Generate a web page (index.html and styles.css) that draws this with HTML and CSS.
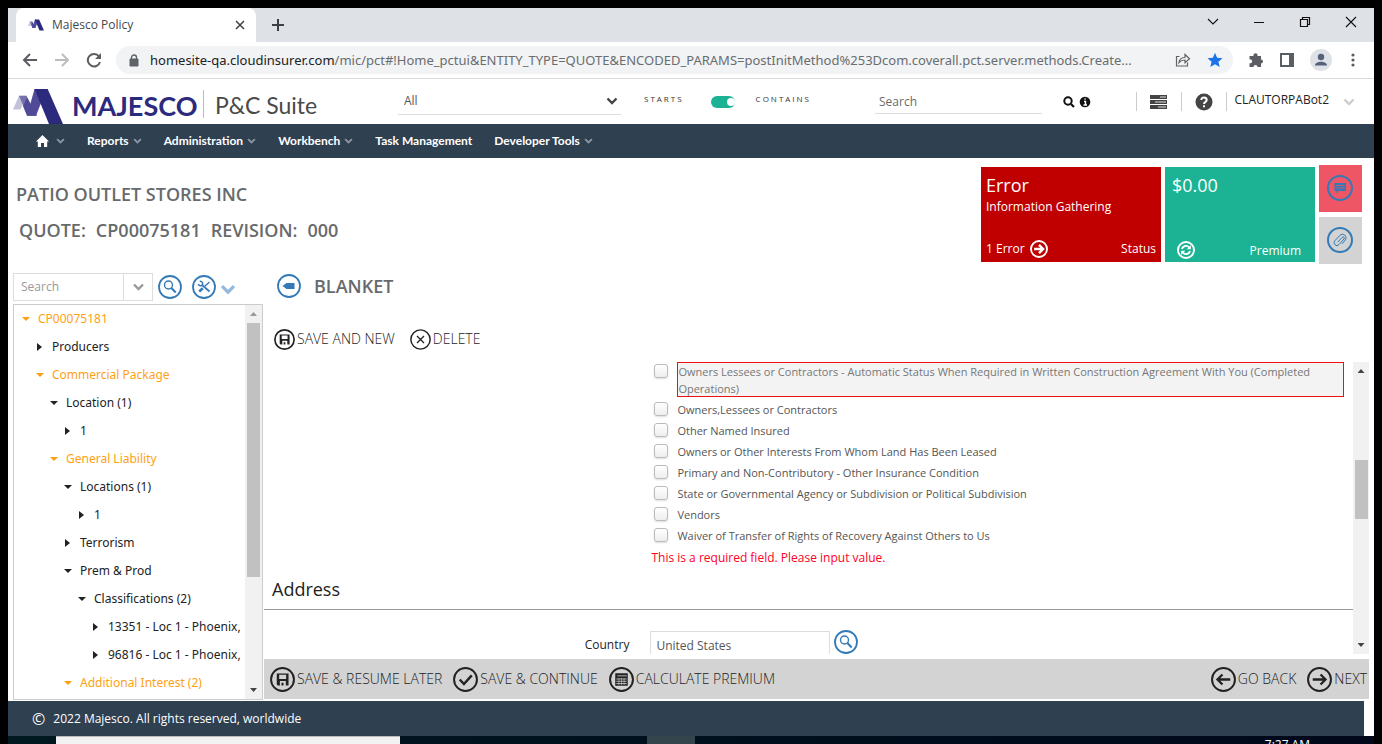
FILE: index.html
```html
<!DOCTYPE html>
<html lang="en">
<head>
<meta charset="utf-8">
<title>Majesco Policy</title>
<link rel="stylesheet" href="styles.css">
</head>
<body>
<svg class="defs" aria-hidden="true">
  <symbol id="logo" viewBox="0 0 50 35">
    <path fill="#c3c1dc" d="M0 20.5 6 6.700h7.500L7.500 20.500z"/>
    <path fill="#7671ad" d="M6 6.700h7.500l6 12-5 8z"/>
    <path fill="#504a98" d="M14 8.500 24 26.700H14L10 17z"/>
    <path fill="#504a98" d="M14 26.700 21.500 0h4L28 14l-5 12.700z"/>
    <path fill="#2c2a7d" d="M21.500 0h13.200L50 35H36z"/>
  </symbol>
  <symbol id="chev" viewBox="0 0 12 8"><path d="M1.500 1.500 6 6l4.500-4.500" fill="none" stroke="currentColor" stroke-width="2.400"/></symbol>
  <symbol id="search" viewBox="0 0 24 24"><circle cx="12" cy="12" r="11" fill="none" stroke="currentColor" stroke-width="1.800"/><circle cx="10.500" cy="10" r="4" fill="none" stroke="currentColor" stroke-width="1.400"/><path d="m13.400 13 4.300 4.500" stroke="currentColor" stroke-width="2"/></symbol>
  <symbol id="tools" viewBox="0 0 24 24"><circle cx="12" cy="12" r="11" fill="none" stroke="currentColor" stroke-width="1.800"/><path d="m10 10 7.500 6.500" stroke="currentColor" stroke-width="1.700"/><path d="m17.500 7-4.800 4.300" stroke="currentColor" stroke-width="1.300"/><path d="m10.800 13.200-3.600 3.300" stroke="currentColor" stroke-width="2.600"/><path d="M7.700 6.500A2.200 2.200 0 1 1 6.300 9" fill="none" stroke="currentColor" stroke-width="1.500"/></symbol>
  <symbol id="save" viewBox="0 0 24 24"><circle cx="12" cy="12" r="11" fill="none" stroke="currentColor" stroke-width="1.900"/><path fill="currentColor" fill-rule="evenodd" d="M6.500 6.300h11.300v11.400H7.500l-1-1zM8.800 7.500v4h6.700v-4zM9.500 13.500v4.200h1.500v-2.700h2v2.700h2.200v-4.200z"/></symbol>
  <symbol id="x" viewBox="0 0 24 24"><circle cx="12" cy="12" r="11" fill="none" stroke="currentColor" stroke-width="1.700"/><path d="m8 8 8 8M16 8l-8 8" stroke="currentColor" stroke-width="1.500"/></symbol>
  <symbol id="check" viewBox="0 0 24 24"><circle cx="12" cy="12" r="11" fill="none" stroke="currentColor" stroke-width="1.900"/><path d="m6.500 12 4 4.300L18 8" fill="none" stroke="currentColor" stroke-width="2.400"/></symbol>
  <symbol id="calc" viewBox="0 0 24 24"><circle cx="12" cy="12" r="11" fill="none" stroke="currentColor" stroke-width="1.900"/><path fill="currentColor" d="M6 6h12v12H6z"/><path d="M8 8.500h9M7 11.500h10M7 13.700h10M7 15.900h10" stroke="#d3d3d3" stroke-width=".8"/><path d="M9.500 10.500v7M12 10.500v7M14.500 10.500v7" stroke="#d3d3d3" stroke-width=".5"/></symbol>
  <symbol id="right" viewBox="0 0 24 24"><circle cx="12" cy="12" r="11" fill="none" stroke="currentColor" stroke-width="1.900"/><path d="M5.500 12h12M13 7.200l4.800 4.800-4.800 4.800" fill="none" stroke="currentColor" stroke-width="2.200"/></symbol>
  <symbol id="right-bold" viewBox="0 0 24 24"><circle cx="12" cy="12" r="10.700" fill="none" stroke="currentColor" stroke-width="2.500"/><path d="M5.500 12h11M12 6.500l5.500 5.500-5.500 5.500" fill="none" stroke="currentColor" stroke-width="3.200"/></symbol>
  <symbol id="left" viewBox="0 0 24 24"><circle cx="12" cy="12" r="11" fill="none" stroke="currentColor" stroke-width="1.900"/><path d="M18.500 12h-12M11 7.200 6.200 12l4.800 4.800" fill="none" stroke="currentColor" stroke-width="2.200"/></symbol>
  <symbol id="tag" viewBox="0 0 24 24"><circle cx="12" cy="12" r="11" fill="none" stroke="currentColor" stroke-width="1.800"/><path d="m5.500 12 4-3h8v6h-8z" fill="currentColor"/></symbol>
  <symbol id="sync" viewBox="0 0 24 24"><circle cx="12" cy="12" r="10.700" fill="none" stroke="currentColor" stroke-width="2.500"/><path d="M6.500 10.500a5.800 5.800 0 0 1 9.800-2M17.500 13.500a5.800 5.800 0 0 1-9.800 2" fill="none" stroke="currentColor" stroke-width="2.500"/><path d="M18.500 5.500v5.500H13zM5.500 18.500V13H11z" fill="currentColor"/></symbol>
  <symbol id="note" viewBox="0 0 26 26"><circle cx="13" cy="13" r="12" fill="none" stroke="currentColor" stroke-width="2"/><path fill="currentColor" d="M7.500 8h11.500v8h-7.500L9.500 18.500V16h-2z"/><path d="M9 10.500h8.500M9 13h8.500" stroke="#ee5565" stroke-width=".8"/></symbol>
  <symbol id="clip" viewBox="0 0 26 26"><circle cx="13" cy="13" r="12" fill="none" stroke="currentColor" stroke-width="2"/><path d="m10.800 15.200 4.400-4.900a1.200 1.200 0 0 1 1.800 1.700L12 17.600a2.800 2.800 0 0 1-4.200-3.800l5.200-5.600a3.600 3.600 0 0 1 5.400 4.700l-3.200 3.900" fill="none" stroke="currentColor"/></symbol>
</svg>

<div class="window">
  <div class="tabs">
    <div class="tab"><svg class="fav"><use href="#logo"/></svg><span class="tab-title">Majesco Policy</span>
      <button class="plain" aria-label="Close tab"><svg width="10" height="10"><path d="m1 1 8 8M9 1 1 9" stroke="#3c4043" stroke-width="1.500"/></svg></button></div>
    <button class="plain" aria-label="New tab"><svg width="14" height="14"><path d="M7 1v12M1 7h12" stroke="#3c4043" stroke-width="2"/></svg></button>
    <div class="controls">
      <button class="plain" aria-label="Search tabs"><svg width="12" height="12"><path d="m1 3 5 5 5-5" fill="none" stroke="#111" stroke-width="1.100"/></svg></button>
      <button class="plain" aria-label="Minimize"><svg width="12" height="12"><path d="M1 6.500h10" stroke="#111"/></svg></button>
      <button class="plain" aria-label="Restore"><svg width="12" height="12"><path d="M1.500 3.500h7v7h-7zM3.500 3.500v-2h7v7h-2" fill="none" stroke="#111" stroke-width="1.200"/></svg></button>
      <button class="plain" aria-label="Close"><svg width="12" height="12"><path d="m1 1 10 10M11 1 1 11" stroke="#111" stroke-width="1.100"/></svg></button>
    </div>
  </div>

  <div class="toolbar">
    <button class="plain" aria-label="Back"><svg width="16" height="16"><path d="M15 8H2M8 2 2 8l6 6" fill="none" stroke="#5a5d61" stroke-width="2"/></svg></button>
    <button class="plain" aria-label="Forward"><svg width="16" height="16"><path d="M1 8h13M8 2l6 6-6 6" fill="none" stroke="#bbbdc0" stroke-width="2"/></svg></button>
    <button class="plain" aria-label="Reload"><svg width="16" height="16"><path d="M13 4.500A6.200 6.200 0 1 0 14 10" fill="none" stroke="#5a5d61" stroke-width="2"/><path d="M15 1v6H9z" fill="#5a5d61"/></svg></button>
    <div class="omnibox">
      <svg width="10" height="13"><path d="M1 5h8v7H1z" fill="#5f6368" stroke="#5f6368"/><path d="M2.500 5V3.500a2.500 2.500 0 0 1 5 0V5" fill="none" stroke="#5f6368" stroke-width="1.400"/></svg>
      <span class="url"><b>homesite-qa.cloudinsurer.com</b>/mic/pct#!Home_pctui&amp;ENTITY_TYPE=QUOTE&amp;ENCODED_PARAMS=postInitMethod%253Dcom.coverall.pct.server.methods.Create...</span>
      <button class="plain" aria-label="Share"><svg width="16" height="16"><path d="M4.500 4.500H1.500v9.500h11v-3.500" fill="none" stroke="#5f6368" stroke-width="1.200"/><path d="M4 10.500C4.500 7 7 5.500 10 5.500v-3l4.500 4.200-4.500 4V8C7.500 8 5.500 8.700 4 10.500z" fill="none" stroke="#5f6368" stroke-width="1.200"/></svg></button>
      <button class="plain" aria-label="Bookmark"><svg width="16" height="16"><path d="m8 .8 2.100 5 5.400.4-4.100 3.600 1.300 5.300L8 12.300l-4.700 2.800 1.300-5.300L.5 6.200l5.400-.4z" fill="#1a73e8"/></svg></button>
    </div>
    <button class="plain" aria-label="Extensions"><svg width="16" height="16"><path d="M1.500 4h4a2.100 2.100 0 1 1 4 0H13v3.500a2 2 0 1 1 0 4V15H9.500a2 2 0 1 0-4 0h-4v-3.800a2 2 0 1 0 0-3.800z" fill="#5a5d61"/></svg></button>
    <button class="plain" aria-label="Side panel"><svg width="14" height="14"><path d="M1 1h12v12H1z" fill="none" stroke="#5a5d61" stroke-width="2"/><path d="M9 1h4v12H9z" fill="#5a5d61"/></svg></button>
    <button class="plain" aria-label="Profile"><svg width="22" height="22"><circle cx="11" cy="11" r="11" fill="#dee1e6"/><circle cx="11" cy="8" r="3.200" fill="#55637a"/><path d="M5 16.500c0-5 12-5 12 0z" fill="#55637a"/></svg></button>
    <button class="plain kebab" aria-label="Menu"><svg width="6" height="14"><g fill="#5a5d61"><circle cx="3" cy="2" r="1.600"/><circle cx="3" cy="7" r="1.600"/><circle cx="3" cy="12" r="1.600"/></g></svg></button>
  </div>

  <header class="header">
    <svg class="logo"><use href="#logo"/></svg>
    <span class="brand">MAJESCO</span>
    <span class="suite">P&amp;C Suite</span>
    <div class="scope"><select aria-label="Search scope"><option>All</option></select><svg class="chev"><use href="#chev"/></svg></div>
    <label class="mode" for="match">STARTS</label>
    <input class="toggle" type="checkbox" id="match" checked>
    <label class="mode contains" for="match">CONTAINS</label>
    <input class="find" type="search" placeholder="Search" aria-label="Search">
    <div class="find-icons">
      <button class="plain" aria-label="Go"><svg width="12" height="12"><circle cx="5" cy="5" r="3.700" fill="none" stroke="#111" stroke-width="2"/><path d="m8 8 3 3" stroke="#111" stroke-width="2.200"/></svg></button>
      <button class="plain" aria-label="Info"><svg width="12" height="12"><circle cx="6" cy="6" r="5.300" fill="#111"/><path d="M5 5.500h1.500V9M4.500 9h3.500M5.500 3h1.200" fill="none" stroke="#fff" stroke-width="1.400"/></svg></button>
    </div>
    <div class="user">
      <button class="plain cell tasks" aria-label="Tasks"><svg width="17" height="14"><path d="M0 0h17v4H0zM0 5h17v4H0zM0 10h17v4H0z" fill="#444"/><path d="M10 2h6M5 7h11M8 12h8" stroke="#ddd"/></svg></button>
      <button class="plain cell help" aria-label="Help"><svg width="18" height="18"><circle cx="9" cy="9" r="8.500" fill="#444"/><path d="M6.300 7C6.300 3.500 11.700 3.700 11.700 7c0 2-2.700 2-2.700 4" fill="none" stroke="#fff" stroke-width="2"/><path d="M8 12.300h2v2H8z" fill="#fff"/></svg></button>
      <button class="plain cell name"><span>CLAUTORPABot2</span><svg class="chev"><use href="#chev"/></svg></button>
    </div>
  </header>

  <nav class="nav">
    <a href="#" aria-label="Home"><svg width="13" height="12"><path d="M6.500 0 13 6.500h-1.800V12H8V8H5v4H1.800V6.500H0z" fill="#fff"/></svg><svg class="chev"><use href="#chev"/></svg></a>
    <a href="#">Reports<svg class="chev"><use href="#chev"/></svg></a>
    <a href="#">Administration<svg class="chev"><use href="#chev"/></svg></a>
    <a href="#">Workbench<svg class="chev"><use href="#chev"/></svg></a>
    <a href="#">Task Management</a>
    <a href="#">Developer Tools<svg class="chev"><use href="#chev"/></svg></a>
  </nav>

  <section class="summary">
    <div class="titles">
      <h1>PATIO OUTLET STORES INC</h1>
      <p class="quote"><span>QUOTE:</span><span>CP00075181</span><span>REVISION:</span><span>000</span></p>
    </div>
    <div class="tile error">
      <strong>Error</strong><span>Information Gathering</span>
      <div class="tile-foot"><span>1 Error</span><svg><use href="#right-bold"/></svg><span class="end">Status</span></div>
    </div>
    <div class="tile premium">
      <strong>$0.00</strong>
      <div class="tile-foot"><svg><use href="#sync"/></svg><span class="end">Premium</span></div>
    </div>
    <div class="minis">
      <button class="mini notes" aria-label="Notes"><svg><use href="#note"/></svg></button>
      <button class="mini" aria-label="Attachments"><svg><use href="#clip"/></svg></button>
    </div>
  </section>

  <main class="main">
    <aside class="side">
      <div class="side-search">
        <div class="combo"><input type="text" placeholder="Search" aria-label="Search tree"><button class="plain" aria-label="Options"><svg class="chev"><use href="#chev"/></svg></button></div>
        <button class="plain round" aria-label="Find"><svg><use href="#search"/></svg></button>
        <button class="plain round" aria-label="Tools"><svg><use href="#tools"/></svg></button>
        <button class="plain more" aria-label="More"><svg class="chev"><use href="#chev"/></svg></button>
      </div>
      <div class="tree">
        <ul>
          <li class="hot open">CP00075181</li>
          <li class="l1">Producers</li>
          <li class="l1 hot open">Commercial Package</li>
          <li class="l2 open">Location (1)</li>
          <li class="l3">1</li>
          <li class="l2 hot open">General Liability</li>
          <li class="l3 open">Locations (1)</li>
          <li class="l4">1</li>
          <li class="l3">Terrorism</li>
          <li class="l3 open">Prem &amp; Prod</li>
          <li class="l4 open">Classifications (2)</li>
          <li class="l5">13351 - Loc 1 - Phoenix,</li>
          <li class="l5">96816 - Loc 1 - Phoenix,</li>
          <li class="l3 hot open">Additional Interest (2)</li>
        </ul>
        <div class="bar"><i class="up dim"></i><i class="track"><i class="thumb"></i></i><i class="down"></i></div>
      </div>
    </aside>

    <div class="content">
      <div class="heading"><button class="plain round" aria-label="Back to list"><svg><use href="#tag"/></svg></button><h2>BLANKET</h2></div>
      <div class="actions top">
        <button class="plain"><svg><use href="#save"/></svg>SAVE AND NEW</button>
        <button class="plain"><svg><use href="#x"/></svg>DELETE</button>
      </div>
      <div class="pane">
        <div class="form">
          <div class="row">
            <div class="options">
              <label class="bad"><input type="checkbox"><span>Owners Lessees or Contractors - Automatic Status When Required in Written Construction Agreement With You (Completed Operations)</span></label>
              <label><input type="checkbox"><span>Owners,Lessees or Contractors</span></label>
              <label><input type="checkbox"><span>Other Named Insured</span></label>
              <label><input type="checkbox"><span>Owners or Other Interests From Whom Land Has Been Leased</span></label>
              <label><input type="checkbox"><span>Primary and Non-Contributory - Other Insurance Condition</span></label>
              <label><input type="checkbox"><span>State or Governmental Agency or Subdivision or Political Subdivision</span></label>
              <label><input type="checkbox"><span>Vendors</span></label>
              <label><input type="checkbox"><span>Waiver of Transfer of Rights of Recovery Against Others to Us</span></label>
              <p class="message">This is a required field. Please input value.</p>
            </div>
          </div>
          <h3>Address</h3>
          <div class="row country">
            <label for="country">Country</label>
            <div class="field"><input type="text" id="country" value="United States"><button class="plain round" aria-label="Find country"><svg><use href="#search"/></svg></button></div>
          </div>
        </div>
        <div class="bar"><i class="up"></i><i class="track mid"><i class="thumb"></i></i><i class="down"></i></div>
      </div>
      <div class="actions bottom">
        <button class="plain"><svg><use href="#save"/></svg>SAVE &amp; RESUME LATER</button>
        <button class="plain"><svg><use href="#check"/></svg>SAVE &amp; CONTINUE</button>
        <button class="plain"><svg><use href="#calc"/></svg>CALCULATE PREMIUM</button>
        <button class="plain first-right"><svg><use href="#left"/></svg>GO BACK</button>
        <button class="plain"><svg><use href="#right"/></svg>NEXT</button>
      </div>
    </div>
  </main>
  <footer class="footer"><span class="copy">©</span>2022 Majesco. All rights reserved, worldwide</footer>
</div>
<div class="taskbar"><span class="task-search"></span><span class="task-app"></span><time>7:27 AM</time></div>
</body>
</html>
```

FILE: styles.css
```css
* { box-sizing: border-box; }
html, body { height: 100%; }
body {
  margin: 0; padding: 8px 8px 0; background: #000; overflow: hidden;
  display: flex; flex-direction: column;
  font: 12px/16px "Open Sans", sans-serif; color: #222;
}
h1, h2, h3, p, ul { margin: 0; padding: 0; }
input, select, button { font: inherit; color: inherit; margin: 0; }
svg { display: block; flex: none; }
.defs { position: absolute; width: 0; height: 0; }
.plain { border: 0; background: none; padding: 0; display: flex; align-items: center; }
.chev { width: 9px; height: 6px; }
.window { flex: 1; min-height: 0; display: flex; flex-direction: column; background: #fff; }

/* browser frame */
.tabs { flex: none; height: 34px; display: flex; align-items: center; background: #dee1e6; padding: 0 17px 0 8px; gap: 15px; }
.tab { width: 240px; height: 34px; background: #fff; border-radius: 8px 8px 0 0; display: flex; align-items: center; gap: 8px; padding: 0 11px 0 12px; }
.fav { width: 16px; height: 16px; }
.tab-title { flex: 1; color: #45494d; }
.controls { margin-left: auto; display: flex; gap: 34px; padding-bottom: 6px; }
.toolbar { flex: none; height: 37px; border-bottom: 1px solid #d9dadc; display: flex; align-items: center; gap: 16px; padding: 0 18px 0 14px; }
.omnibox { flex: 1; min-width: 0; height: 28px; border-radius: 14px; background: #f1f3f4; display: flex; align-items: center; gap: 16px; padding: 0 10px 0 13px; margin: 0 -1px 0 -2px; }
.kebab { margin-left: 2px; }
.url { flex: 1; min-width: 0; margin-left: -5px; font: 13px/20px "Noto Sans", "Open Sans", sans-serif; color: #6a6d70; white-space: nowrap; overflow: hidden; }
.url b { font-weight: 400; color: #202124; }

/* application header */
.header { flex: none; height: 45px; display: flex; align-items: center; padding: 0 19px 0 5px; }
.logo { width: 50px; height: 35px; align-self: flex-end; }
.brand { margin: 8px 0 0 9px; width: 127px; font: 700 27px/32px Lato, sans-serif; color: #2c2a7d; }
.suite { margin: 4px 0 0 4px; padding: 4px 0 2px 11px; border-left: 1px solid #bbb; font: 23px/22px Lato, sans-serif; color: #4a4a4a; width: 116px; white-space: nowrap; }
.scope { margin-left: 79px; width: 223px; height: 26px; border-bottom: 1px solid #ddd; display: grid; align-items: center; }
.scope > * { grid-area: 1 / 1; }
.scope select { appearance: none; border: 0; background: none; padding: 0 6px; width: 100%; color: #555; }
.scope .chev { width: 12px; height: 8px; justify-self: end; margin-right: 3px; color: #444; pointer-events: none; }
.mode { margin-left: 23px; font-size: 8px; line-height: 12px; letter-spacing: 2px; color: #333; padding-bottom: 6px; }
.contains { margin-left: 21px; }
.toggle { appearance: none; width: 24px; height: 12px; border-radius: 6px; background: #1bb394; margin-left: 27px; display: flex; justify-content: flex-end; align-items: center; }
.toggle::after { content: ""; width: 8px; height: 8px; border-radius: 50%; background: #fff; }
.find { margin-left: 64px; width: 167px; height: 24px; border: 0; border-bottom: 1px solid #ddd; padding: 0 4px; background: none; }
.find::placeholder { color: #6b6b6b; opacity: 1; }
.find-icons { display: flex; gap: 4px; margin-left: 21px; }
.user { margin-left: auto; display: flex; align-items: center; }
.cell { height: 19px; border-left: 1px solid #ccc; padding-left: 13px; }
.tasks { width: 45px; }
.help { width: 45px; }
.name { padding-left: 8px; gap: 14px; color: #222; }
.name span { padding-bottom: 4px; }
.name .chev { width: 12px; height: 8px; color: #ccc; }

.nav { flex: none; height: 34px; background: #2f4050; display: flex; align-items: center; gap: 22px; padding: 0 28px; }
.nav a { display: flex; align-items: center; gap: 4px; color: #fff; text-decoration: none; font: 700 12px/16px Lato, sans-serif; }
.nav a:first-child { gap: 7px; }
.nav .chev { color: #8b98a4; }

/* account summary */
.summary { flex: none; height: 115px; display: flex; gap: 4px; padding: 7px 12px 0 8px; align-items: flex-start; }
.titles { flex: 1; padding-top: 17px; }
h1, h2, .quote { font-size: 18px; line-height: 24px; font-weight: 600; color: #676a6c; }
.quote { display: flex; gap: 10px; padding: 12px 0 0 3px; }
.tile { height: 95px; margin-top: 2px; padding: 5px 5px 3px; color: #fff; display: flex; flex-direction: column; }
.tile strong { font-size: 18px; font-weight: 400; line-height: 27px; }
.error { width: 180px; background: #c00000; }
.premium { width: 150px; background: #1bb394; padding: 5px 14px 2px 7px; }
.premium .tile-foot { padding-left: 5px; }
.premium .end { padding-top: 2px; }
.tile-foot { margin-top: auto; display: flex; align-items: center; gap: 5px; height: 20px; }
.tile-foot svg { width: 18px; height: 18px; }
.end { margin-left: auto; }
.minis { display: grid; gap: 5px; }
.mini { width: 43px; height: 47px; border: 0; padding: 0 2px 2px 0; background: #d3d3d3; color: #337ab7; display: grid; place-items: center; }
.mini svg { width: 26px; height: 26px; }
.notes { background: #ee5565; }

.main { flex: 1; min-height: 0; display: flex; padding: 0 5px 1px; gap: 1px; }
.side { width: 250px; flex: none; display: flex; flex-direction: column; gap: 3px; }
.side-search { display: flex; align-items: center; }
.combo { width: 140px; height: 28px; border: 1px solid #ddd; display: flex; }
.combo input { min-width: 0; flex: 1; border: 0; border-right: 1px solid #ddd; padding: 0 7px; }
.combo input::placeholder { color: #999; }
.combo button { width: 28px; justify-content: center; color: #999; }
.combo .chev { width: 13px; height: 8px; }
.round { color: #337ab7; }
.round svg { width: 24px; height: 24px; }
.side-search .round { margin-left: 5px; }
.side-search .round + .round { margin-left: 10px; }
.more { margin: 4px 0 0 4px; color: #93b9dc; }
.more .chev { width: 16px; height: 11px; }
.tree { flex: 1; min-height: 0; border: 1px solid #ccc; display: flex; overflow: hidden; }
.tree ul { flex: 1; min-width: 0; list-style: none; overflow: hidden; font-family: "Noto Sans", "Open Sans", sans-serif; }
.tree li { height: 28px; display: flex; align-items: center; gap: 10px; padding-left: 8px; white-space: nowrap; }
.tree li::before { content: ""; width: 6px; margin-left: 1px; margin-right: -1px; flex: none; height: 8px; background: currentColor; clip-path: polygon(0 0, 5px 4px, 0 100%); }
.tree li.open::before { width: 8px; height: 4px; margin: 0 -2px 0 0; clip-path: polygon(0 0, 100% 0, 50% 100%); }
.tree .l1 { padding-left: 22px; }
.tree .l2 { padding-left: 36px; }
.tree .l3 { padding-left: 50px; }
.tree .l4 { padding-left: 64px; }
.tree .l5 { padding-left: 78px; }
.tree .hot { color: #ff9f14; }

.bar { flex: none; width: 17px; background: #f1f1f1; display: flex; flex-direction: column; align-items: center; }
.pane .bar { width: 16px; }
.bar i { display: block; }
.up, .down { width: 7px; height: 4px; margin: 7px 0; background: #444; clip-path: polygon(50% 0, 100% 100%, 0 100%); }
.down { clip-path: polygon(0 0, 100% 0, 50% 100%); }
.dim { background: #999; }
.track { flex: 1; width: 13px; }
.thumb { height: 71%; background: #c1c1c1; }
.mid { padding-top: 80px; }
.mid .thumb { height: 59px; }

/* record */
.content { flex: 1; min-width: 0; display: flex; flex-direction: column; }
.heading { display: flex; align-items: center; gap: 13px; padding-left: 13px; height: 26px; }
.actions { display: flex; align-items: center; }
.actions button { font-size: 14px; line-height: 20px; font-weight: 300; gap: 2px; color: #222; }
.top { height: 24px; margin: 28px 0 11px; padding-left: 10px; gap: 15px; }
.top svg { width: 21px; height: 21px; }
.pane { flex: 1; min-height: 0; display: flex; }
.form { flex: 1; min-width: 0; overflow: hidden; }
.row { display: grid; grid-template-columns: 11fr 20fr; }
.options { grid-column: 2; padding: 0 9px 0 4px; font-size: 11px; line-height: 17px; color: #555; }
.options label { display: flex; align-items: flex-start; gap: 9px; height: 21px; }
.options .bad { height: 38px; }
.options .bad span { flex: 1; border: 1px solid #e11; background: #f3f3f3; color: #777; height: 35px; line-height: 17px; }
.options label span { padding-top: 1px; }
.options .bad span { padding-top: 0; }
.options input { appearance: none; flex: none; width: 14px; height: 14px; margin-top: 2px; border: 1px solid #bbb; border-radius: 3px; background: linear-gradient(#fff, #eee); box-shadow: 0 1px 2px #ddd; }
.message { margin-left: -3px; padding-top: 1px; font-size: 12px; line-height: 20px; color: #f02; }
h3 { font-size: 18px; line-height: 26px; font-weight: 400; padding: 8px 8px 7px; border-bottom: 1px solid #999; }
.country { padding-top: 20px; }
.country > label { text-align: right; padding: 7px 21px 0 0; color: #222; }
.field { display: flex; gap: 4px; align-items: flex-start; }
.field input { width: 180px; height: 28px; border: 1px solid #ddd; padding: 0 5px; color: #555; margin-top: 1px; }
.bottom { flex: none; height: 40px; margin: 5px 0 1px; padding: 0 2px 0 6px; background: #d3d3d3; gap: 11px; }
.bottom svg { width: 25px; height: 25px; }
.first-right { margin-left: auto; }

.footer { flex: none; height: 35px; margin-right: 10px; background: #2f4050; color: #fff; display: flex; align-items: center; gap: 8px; padding: 0 24px; }
.copy { font-size: 16px; }
.taskbar { flex: none; height: 8px; overflow: hidden; background: linear-gradient(90deg, #001820, #00081a); display: flex; color: #fff; }
.task-search { width: 344px; margin-left: 48px; background: #f2f2f2; border-top: 1px solid #bbb; }
.task-app { width: 48px; margin-left: 247px; background: #34464c; }
.taskbar time { margin: 1px 64px 0 auto; line-height: 16px; }
```
